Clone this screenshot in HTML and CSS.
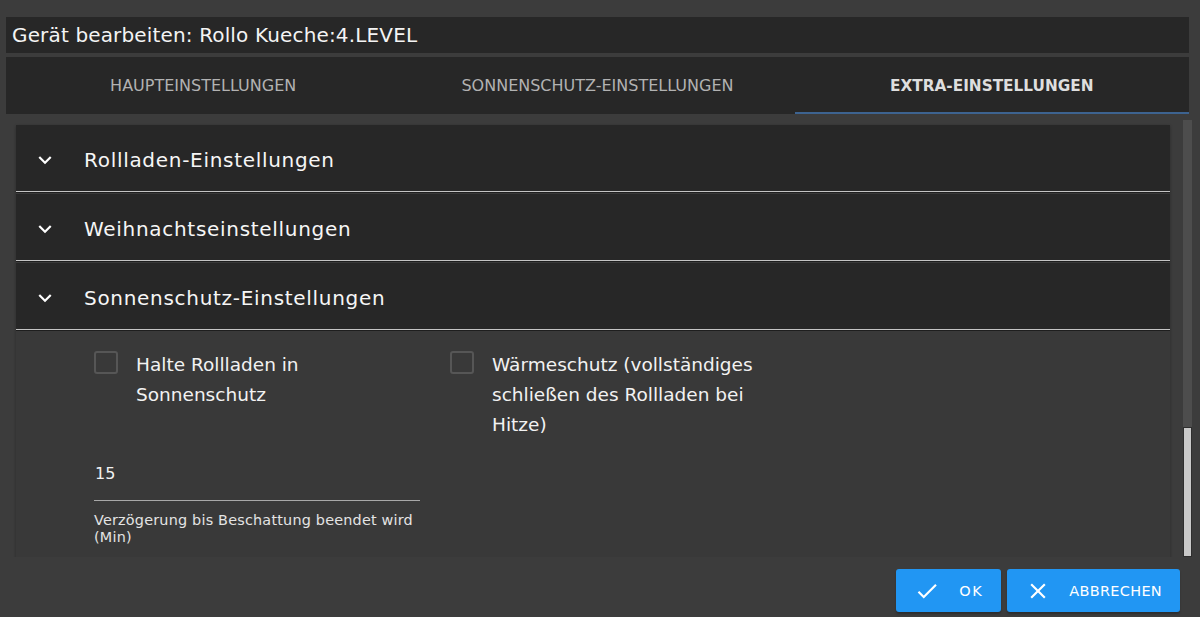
FILE: index.html
```html
<!DOCTYPE html>
<html lang="de">
  <head>
    <meta charset="UTF-8" />
    <meta name="viewport" content="width=device-width, initial-scale=1.0" />
    <title>Gerät bearbeiten</title>
    <link rel="stylesheet" href="styles.css">
  </head>
  <body>
    <div class="dialog">
      <div class="dialog-title">Gerät bearbeiten: Rollo Kueche:4.LEVEL</div>
      <div class="tabs">
        <div class="tab">Haupteinstellungen</div>
        <div class="tab">Sonnenschutz-Einstellungen</div>
        <div class="tab active">Extra-Einstellungen</div>
      </div>
      <div class="dialog-body">
        <div class="scroll-view">
          <div class="panel">
            <div class="panel-header">
              <svg class="chevron" viewBox="0 0 24 24"><path d="M7.41 8.59 12 13.17l4.59-4.58L18 10l-6 6-6-6z"/></svg>
              <span>Rollladen-Einstellungen</span>
            </div>
            <div class="panel-header">
              <svg class="chevron" viewBox="0 0 24 24"><path d="M7.41 8.59 12 13.17l4.59-4.58L18 10l-6 6-6-6z"/></svg>
              <span>Weihnachtseinstellungen</span>
            </div>
            <div class="panel-header">
              <svg class="chevron" viewBox="0 0 24 24"><path d="M7.41 8.59 12 13.17l4.59-4.58L18 10l-6 6-6-6z"/></svg>
              <span>Sonnenschutz-Einstellungen</span>
            </div>
            <div class="panel-body">
              <div class="field-grid">
                <label class="check">
                  <span class="box"></span>
                  <span class="check-label">Halte Rollladen in Sonnenschutz</span>
                </label>
                <label class="check">
                  <span class="box"></span>
                  <span class="check-label">Wärmeschutz (vollständiges schließen des Rollladen bei Hitze)</span>
                </label>
              </div>
              <div class="field-grid">
                <div class="text-field">
                  <div class="input">15</div>
                  <div class="helper">Verzögerung bis Beschattung beendet wird<br>(Min)</div>
                </div>
              </div>
            </div>
          </div>
        </div>
        <div class="scrollbar"><div class="thumb"></div></div>
      </div>
      <div class="dialog-actions">
        <button class="btn btn-ok">
          <svg viewBox="0 0 24 24"><path d="M9 16.17 4.83 12l-1.42 1.41L9 19 21 7l-1.41-1.41z"/></svg>
          OK
        </button>
        <button class="btn">
          <svg viewBox="0 0 24 24"><path d="M19 6.41 17.59 5 12 10.59 6.41 5 5 6.41 10.59 12 5 17.59 6.41 19 12 13.41 17.59 19 19 17.59 13.41 12z"/></svg>
          Abbrechen
        </button>
      </div>
    </div>
  </body>
</html>
```

FILE: styles.css
```css
body {
  margin: 0;
  background-color: #3c3c3c;
  font-family: "DejaVu Sans", sans-serif;
  color: #fff;
  overflow: hidden;
}
.dialog {
  height: 617px;
  padding: 17px 0 0 6px;
  box-sizing: border-box;
}
.dialog-title {
  width: 1183px;
  height: 36px;
  box-sizing: border-box;
  padding-left: 6px;
  display: flex;
  align-items: center;
  background-color: #272727;
  font-size: 20px;
  letter-spacing: 0.15px;
  color: #f4f4f4;
}
.tabs {
  width: 1183px;
  height: 57px;
  margin-top: 4px;
  display: flex;
  background-color: #272727;
}
.tab {
  flex: 1;
  display: flex;
  align-items: center;
  justify-content: center;
  text-transform: uppercase;
  font-size: 16px;
  color: #b2b2b2;
  border-bottom: 2px solid transparent;
  padding-top: 2px;
}
.tab.active {
  color: #dedede;
  font-size: 15.3px;
  font-weight: bold;
  border-bottom-color: #3d6390;
}
.dialog-body {
  display: flex;
  height: 437px;
  margin-top: 6px;
}
.scroll-view {
  flex: 1;
  padding: 5px 13px 0 10px;
  overflow: hidden;
}
.scrollbar {
  width: 9px;
  margin-right: 8px;
  background-color: #4d4d4d;
  display: flex;
  flex-direction: column;
  justify-content: flex-end;
}
.thumb {
  height: 128px;
  background-color: #c9c9c9;
  border: 1px solid #2e2e2e;
}
.panel {
  background-color: #393939;
  box-shadow: 0 1px 3px rgba(0, 0, 0, 0.3);
}
.panel-header {
  height: 67px;
  box-sizing: border-box;
  padding-top: 4px;
  display: flex;
  align-items: center;
  background-color: #272727;
  border-bottom: 1px solid #c4c4c4;
  box-shadow: 0 1px 0 #1e1e1e;
  margin-bottom: 2px;
  font-size: 20px;
  letter-spacing: 0.7px;
  color: #f6f6f6;
}
.chevron {
  width: 26px;
  height: 26px;
  margin: 0 26px 0 16px;
  fill: #fff;
}
.panel-body {
  padding: 19px 0 60px 78px;
}
.field-grid {
  display: grid;
  grid-template-columns: repeat(3, 326px);
  column-gap: 30px;
}
.check {
  display: flex;
  align-items: flex-start;
}
.box {
  flex: none;
  width: 20px;
  height: 19px;
  margin: 0 18px 0 0;
  border: 2px solid #565656;
  border-radius: 3px;
}
.check-label {
  width: 275px;
  font-size: 18.5px;
  line-height: 30px;
  margin-top: -1px;
  color: #f2f2f2;
}
.text-field {
  margin-top: 18px;
}
.input {
  font-size: 16px;
  padding: 6px 0 17px 1px;
  border-bottom: 1px solid #a8a8a8;
  color: #f2f2f2;
}
.helper {
  margin-top: 11px;
  font-size: 14.4px;
  line-height: 17px;
  letter-spacing: 0.2px;
  white-space: nowrap;
  color: #e4e4e4;
}
.dialog-actions {
  display: flex;
  justify-content: flex-end;
  gap: 6px;
  padding: 12px 20px 0 0;
}
.btn {
  height: 43px;
  display: flex;
  align-items: center;
  gap: 18px;
  padding: 0 18px;
  background-color: #2196f3;
  color: #fff;
  border: none;
  border-radius: 3px;
  font-family: inherit;
  font-size: 14.5px;
  letter-spacing: 0.3px;
  text-transform: uppercase;
  box-shadow: 0 2px 2px rgba(0, 0, 0, 0.25);
}
.btn-ok {
  padding: 0 18px 0 18px;
  gap: 19px;
  letter-spacing: 1.5px;
}
.btn svg {
  width: 26px;
  height: 26px;
  fill: #fff;
}
```
